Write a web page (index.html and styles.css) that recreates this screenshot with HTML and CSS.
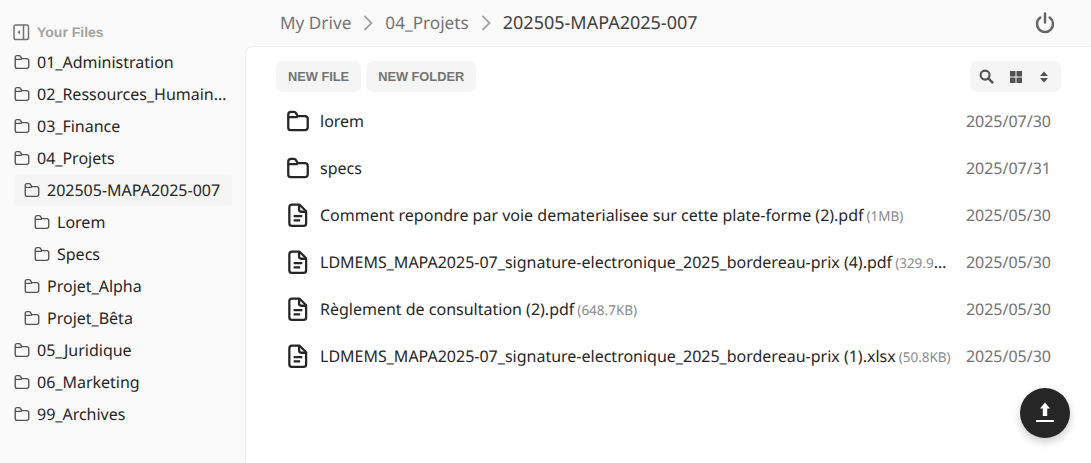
FILE: index.html
```html
<!DOCTYPE html>
<html lang="fr">
<head>
  <meta charset="UTF-8">
  <meta name="viewport" content="width=device-width, initial-scale=1.0">
  <title>My Drive</title>
  <link rel="stylesheet" href="styles.css">
</head>
<body>
  <svg class="sprites" width="0" height="0">
    <symbol id="folder" viewBox="0 0 24 24">
      <path d="M3 6V18a2.500 2.500 0 0 0 2.500 2.500h13A2.500 2.500 0 0 0 21 18V10a2.500 2.500 0 0 0-2.500-2.500h-6.700L9.600 4.100A2 2 0 0 0 8.200 3.500H5.500A2.500 2.500 0 0 0 3 6zM3 8.500h8.800" fill="none" stroke="currentColor" stroke-linejoin="round"/>
    </symbol>
    <symbol id="file" viewBox="0 0 24 24">
      <path d="M6.500 2.500h7l6 6v11a2.500 2.500 0 0 1-2.500 2.500H6.500A2.500 2.500 0 0 1 4 19.500v-14.500a2.500 2.500 0 0 1 2.500-2.500z" fill="none" stroke="currentColor" stroke-linejoin="round"/>
      <path d="M13 3v4a2 2 0 0 0 2 2h4M8 13h8M8 17h6" fill="none" stroke="currentColor"/>
    </symbol>
  </svg>

  <aside class="sidebar">
    <div class="side-title">
      <svg class="collapse" viewBox="0 0 18 18">
        <rect x="2" y="2" width="14.500" height="14.500" rx="1.500" fill="none" stroke="currentColor" stroke-width="1.500"/>
        <path d="M11.500 2v14.500" stroke="currentColor" stroke-width="1.500"/>
        <path d="M8 7v4.500L5.500 9.250z" fill="currentColor"/>
      </svg>
      <span>Your Files</span>
    </div>
    <ul class="tree">
      <li><svg class="ic"><use href="#folder"/></svg><span class="lbl">01_Administration</span></li>
      <li><svg class="ic"><use href="#folder"/></svg><span class="lbl">02_Ressources_Humaines</span></li>
      <li><svg class="ic"><use href="#folder"/></svg><span class="lbl">03_Finance</span></li>
      <li><svg class="ic"><use href="#folder"/></svg><span class="lbl">04_Projets</span></li>
      <li class="lvl1 active"><svg class="ic"><use href="#folder"/></svg><span class="lbl">202505-MAPA2025-007</span></li>
      <li class="lvl2"><svg class="ic"><use href="#folder"/></svg><span class="lbl">Lorem</span></li>
      <li class="lvl2"><svg class="ic"><use href="#folder"/></svg><span class="lbl">Specs</span></li>
      <li class="lvl1"><svg class="ic"><use href="#folder"/></svg><span class="lbl">Projet_Alpha</span></li>
      <li class="lvl1"><svg class="ic"><use href="#folder"/></svg><span class="lbl">Projet_Bêta</span></li>
      <li><svg class="ic"><use href="#folder"/></svg><span class="lbl">05_Juridique</span></li>
      <li><svg class="ic"><use href="#folder"/></svg><span class="lbl">06_Marketing</span></li>
      <li><svg class="ic"><use href="#folder"/></svg><span class="lbl">99_Archives</span></li>
    </ul>
  </aside>

  <div class="main">
    <header class="topbar">
      <nav class="crumbs">
        <span>My Drive</span>
        <svg class="chev" viewBox="0 0 10 16"><path d="M1.500 1 8.500 8l-7 7" fill="none" stroke="currentColor" stroke-width="1.800"/></svg>
        <span>04_Projets</span>
        <svg class="chev" viewBox="0 0 10 16"><path d="M1.500 1 8.500 8l-7 7" fill="none" stroke="currentColor" stroke-width="1.800"/></svg>
        <span class="current">202505-MAPA2025-007</span>
      </nav>
      <svg class="power" viewBox="0 0 20 22" width="20" height="22">
        <path d="M10 1.500v9" stroke="currentColor" stroke-width="2.500" stroke-linecap="round"/>
        <path d="M5.300 5.500a8 8 0 1 0 9.400 0" fill="none" stroke="currentColor" stroke-width="2.500" stroke-linecap="round"/>
      </svg>
    </header>

    <section class="content">
      <div class="toolbar">
        <div class="actions">
          <button class="btn">NEW FILE</button>
          <button class="btn">NEW FOLDER</button>
        </div>
        <div class="tools">
          <svg viewBox="0 0 16 16" width="15" height="15"><circle cx="6.500" cy="6.500" r="4.800" fill="none" stroke="currentColor" stroke-width="2.200"/><path d="m10 10 5 5" stroke="currentColor" stroke-width="2.600"/></svg>
          <svg viewBox="0 0 14 14" width="14" height="14"><path d="M1 1h5.500v5.500H1zM7.500 1H13v5.500H7.500zM1 7.500h5.500V13H1zM7.500 7.500H13V13H7.500z" fill="currentColor"/></svg>
          <svg class="sort" viewBox="0 0 10 14" width="10" height="14"><path d="M5 1.500 9 6H1zM5 12.500 1 8h8z" fill="currentColor"/></svg>
        </div>
      </div>

      <ul class="files">
        <li><svg class="ic-big"><use href="#folder"/></svg><div class="name"><span>lorem</span></div><time>2025/07/30</time></li>
        <li><svg class="ic-big"><use href="#folder"/></svg><div class="name"><span>specs</span></div><time>2025/07/31</time></li>
        <li><svg class="ic-big"><use href="#file"/></svg><div class="name"><span>Comment repondre par voie dematerialisee sur cette plate-forme (2).pdf</span><small>(1MB)</small></div><time>2025/05/30</time></li>
        <li><svg class="ic-big"><use href="#file"/></svg><div class="name"><span>LDMEMS_MAPA2025-07_signature-electronique_2025_bordereau-prix (4).pdf</span><small>(329.9KB)</small></div><time>2025/05/30</time></li>
        <li><svg class="ic-big"><use href="#file"/></svg><div class="name"><span>Règlement de consultation (2).pdf</span><small>(648.7KB)</small></div><time>2025/05/30</time></li>
        <li><svg class="ic-big"><use href="#file"/></svg><div class="name"><span>LDMEMS_MAPA2025-07_signature-electronique_2025_bordereau-prix (1).xlsx</span><small>(50.8KB)</small></div><time>2025/05/30</time></li>
      </ul>

      <button class="fab" aria-label="Upload">
        <svg viewBox="0 0 24 24" width="24" height="24"><path d="M12 1.500 17 7.500h-2.800V15H9.800V7.500H7z" fill="#fff"/><path d="M3 19h18v2H3z" fill="#fff"/></svg>
      </button>
    </section>
  </div>
</body>
</html>
```

FILE: styles.css
```css
* {
  box-sizing: border-box;
}
html, body {
  height: 100%;
}
body {
  margin: 0;
  display: flex;
  overflow: hidden;
  background-color: #fafafa;
  font-family: "Noto Sans", sans-serif;
  color: #262626;
  text-rendering: geometricPrecision;
}
.sprites {
  position: absolute;
}
.sidebar {
  width: 245px;
  flex-shrink: 0;
  padding: 22px 13px 0 14px;
}
.side-title {
  display: flex;
  align-items: center;
  gap: 7px;
  height: 20px;
  margin-bottom: 4px;
  margin-left: -2px;
  font-family: "Liberation Sans", sans-serif;
  font-size: 14px;
  font-weight: bold;
  color: #a3a3a3;
}
.collapse {
  width: 18px;
  height: 18px;
  color: #737373;
  flex-shrink: 0;
}
.tree {
  list-style: none;
  margin: 0;
  padding: 0;
}
.tree li {
  display: flex;
  align-items: center;
  gap: 6px;
  height: 32px;
  padding-right: 5px;
  font-size: 16px;
  border-radius: 4px;
}
.tree .lvl1 {
  padding-left: 10px;
}
.tree .lvl2 {
  padding-left: 20px;
}
.tree .active {
  background-color: #f5f5f5;
}
.ic {
  width: 18px;
  height: 18px;
  margin-left: -1px;
  color: #525252;
  stroke-width: 1.800;
  flex-shrink: 0;
}
.lbl {
  white-space: nowrap;
  overflow: hidden;
  text-overflow: ellipsis;
}
.main {
  flex: 1;
  min-width: 0;
  display: flex;
  flex-direction: column;
}
.topbar {
  height: 46px;
  flex-shrink: 0;
  display: flex;
  align-items: center;
  justify-content: space-between;
  padding: 0 36px 0 35px;
}
.crumbs {
  display: flex;
  align-items: center;
  gap: 12px;
  font-size: 17.200px;
  color: #737373;
}
.crumbs .current {
  font-size: 18px;
  color: #404040;
}
.chev {
  width: 10px;
  height: 16px;
  color: #a3a3a3;
}
.power {
  color: #666;
}
.content {
  position: relative;
  flex: 1;
  background-color: #fff;
  border-top: 1px solid #efefef;
  border-left: 1px solid #efefef;
  border-top-left-radius: 8px;
  padding: 14px 30px 0 30px;
}
.toolbar {
  display: flex;
  justify-content: space-between;
  margin-bottom: 5px;
}
.actions {
  display: flex;
  gap: 5px;
}
.btn {
  height: 31px;
  padding: 0 12px;
  border: none;
  border-radius: 7px;
  background-color: #f5f5f5;
  font-family: "Liberation Sans", sans-serif;
  font-size: 12.800px;
  font-weight: bold;
  color: #737373;
}
.tools {
  display: flex;
  align-items: center;
  gap: 15px;
  height: 31px;
  width: 91px;
  padding-left: 9px;
  border-radius: 7px;
  background-color: #f5f5f5;
  color: #525252;
}
.sort {
  margin-left: 1px;
}
.files {
  list-style: none;
  margin: 0;
  padding: 0;
}
.files li {
  display: flex;
  align-items: center;
  height: 47px;
  padding: 0 10px 0 9px;
  font-size: 16px;
}
.ic-big {
  width: 26px;
  height: 26px;
  margin-right: 9px;
  flex-shrink: 0;
  color: #262626;
  stroke-width: 2.100;
}
.name {
  flex: 1;
  min-width: 0;
  white-space: nowrap;
  overflow: hidden;
  text-overflow: ellipsis;
}
.name small {
  margin-left: 3px;
  font-size: 13.500px;
  color: #8a8a8a;
}
.files time {
  margin-left: 14px;
  color: #737373;
}
.fab {
  position: absolute;
  right: 21px;
  bottom: 25px;
  width: 50px;
  height: 50px;
  display: flex;
  align-items: center;
  justify-content: center;
  padding: 0;
  border: none;
  border-radius: 50%;
  background-color: #262626;
  box-shadow: 0 4px 8px rgba(0, 0, 0, 0.2);
}
```
